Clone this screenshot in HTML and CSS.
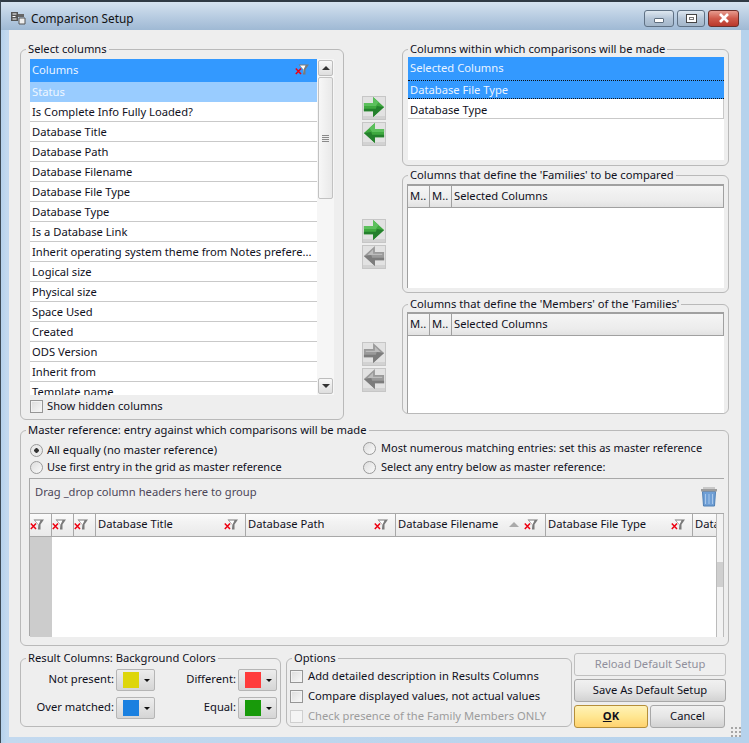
FILE: index.html
```html
<!DOCTYPE html>
<html lang="en">
<head>
<meta charset="utf-8">
<title>Comparison Setup</title>
<link rel="stylesheet" href="styles.css">
</head>
<body>
<svg class="defs" width="0" height="0" aria-hidden="true">
  <defs>
    <symbol id="filter" viewBox="0 0 14 11">
      <path d="M3.500 .5h10.500L10.500 5.500V10.500H8V5.500z" fill="#7a7a7a"/>
      <path d="M5 1.500h5.500L8.600 5.500V9.500L8.200 5.200z" fill="#fff"/>
      <path d="M.8 4.500l5.200 5.500M6 4.500L.8 10" stroke="#ee0010" stroke-width="1.500"/>
    </symbol>
    <symbol id="arrow-right" viewBox="0 0 24 24">
      <path d="M1 7.500h10V1l12 11-12 11v-6.500H1z" fill="#3fa93f"/>
      <path d="M1 7.500h10V1l6 5.500-3 4.500H1z" fill="#5cc05c"/>
      <path d="M1 14h13l1-3 8 1-12 11v-6.500H1z" fill="#24802c"/>
    </symbol>
    <symbol id="arrow-left" viewBox="0 0 24 24">
      <path d="M23 7.500H13V1L1 12l12 11v-6.500h10z" fill="#3fa93f"/>
      <path d="M23 7.500H13V1L7 6.500l3 4.500h13z" fill="#5cc05c"/>
      <path d="M23 14H10l-1-3-8 1 12 11v-6.500h10z" fill="#24802c"/>
    </symbol>
    <symbol id="arrow-right-off" viewBox="0 0 24 24">
      <path d="M1 7.500h10V1l12 11-12 11v-6.500H1z" fill="#9a9a9a"/>
      <path d="M3 9.500h10V5l6 6H3z" fill="#bcbcbc"/>
      <path d="M1 14h13l1-3 8 1-12 11v-6.500H1z" fill="#7c7c7c"/>
    </symbol>
    <symbol id="arrow-left-off" viewBox="0 0 24 24">
      <path d="M23 7.500H13V1L1 12l12 11v-6.500h10z" fill="#9a9a9a"/>
      <path d="M21 9.500H11V5l-6 6h16z" fill="#bcbcbc"/>
      <path d="M23 14H10l-1-3-8 1 12 11v-6.500h10z" fill="#7c7c7c"/>
    </symbol>
  </defs>
</svg>
<div class="frame">
  <header class="titlebar">
    <svg class="app-icon" width="16" height="14" viewBox="0 0 16 14"><path d="M1 1h7v9H1z" fill="#555"/><path d="M2.500 3h4M2.500 5.500h3M2.500 8h4" stroke="#fff"/><path d="M8 3h6v3H8z" fill="#666"/><path d="M9 7h6v6H9z" fill="#eee" stroke="#555"/></svg>
    <span class="title">Comparison Setup</span>
    <div class="winbtns">
      <div class="winbtn"><span class="glyph-min"></span></div>
      <div class="winbtn narrow"><span class="glyph-max"></span></div>
      <div class="winbtn close"><svg width="12" height="10" viewBox="0 0 12 10"><path d="M2 1l8 8M10 1L2 9" stroke="#fff" stroke-width="2.600"/></svg></div>
    </div>
  </header>
  <main class="client">
    <div class="top">
      <fieldset class="group select-group">
        <legend>Select columns</legend>
        <div class="list-wrap">
          <div class="list">
            <div class="list-head"><span>Columns</span><svg class="filter" width="14" height="11"><use href="#filter"/></svg></div>
            <div class="row status">Status</div>
            <div class="row">Is Complete Info Fully Loaded?</div>
            <div class="row">Database Title</div>
            <div class="row">Database Path</div>
            <div class="row">Database Filename</div>
            <div class="row">Database File Type</div>
            <div class="row">Database Type</div>
            <div class="row">Is a Database Link</div>
            <div class="row">Inherit operating system theme from Notes prefere...</div>
            <div class="row">Logical size</div>
            <div class="row">Physical size</div>
            <div class="row">Space Used</div>
            <div class="row">Created</div>
            <div class="row">ODS Version</div>
            <div class="row">Inherit from</div>
            <div class="row">Template name</div>
          </div>
          <div class="vscroll">
            <div class="sbtn"><span class="tri-up"></span></div>
            <div class="thumb"><span class="grip"></span></div>
            <div class="track"></div>
            <div class="sbtn"><span class="tri-down"></span></div>
          </div>
        </div>
        <label class="check show-hidden"><span class="box"></span>Show hidden columns</label>
      </fieldset>

      <div class="mid">
        <div class="arrows a1">
          <div class="arrow-btn"><svg width="22" height="22"><use href="#arrow-right"/></svg></div>
          <div class="arrow-btn"><svg width="22" height="22"><use href="#arrow-left"/></svg></div>
        </div>
        <div class="arrows a2">
          <div class="arrow-btn"><svg width="22" height="22"><use href="#arrow-right"/></svg></div>
          <div class="arrow-btn"><svg width="22" height="22"><use href="#arrow-left-off"/></svg></div>
        </div>
        <div class="arrows a3">
          <div class="arrow-btn"><svg width="22" height="22"><use href="#arrow-right-off"/></svg></div>
          <div class="arrow-btn"><svg width="22" height="22"><use href="#arrow-left-off"/></svg></div>
        </div>
      </div>

      <div class="right">
        <fieldset class="group g-within">
          <legend>Columns within which comparisons will be made</legend>
          <div class="sel-list">
            <div class="sel-head">Selected Columns</div>
            <div class="sel-row active">Database File Type</div>
            <div class="sel-row">Database Type</div>
          </div>
        </fieldset>
        <fieldset class="group g-fam">
          <legend>Columns that define the 'Families' to be compared</legend>
          <div class="mini-grid">
            <div class="mini-head"><span class="mh m">M..</span><span class="mh m">M..</span><span class="mh">Selected Columns</span></div>
          </div>
        </fieldset>
        <fieldset class="group g-mem">
          <legend>Columns that define the 'Members' of the 'Families'</legend>
          <div class="mini-grid">
            <div class="mini-head"><span class="mh m">M..</span><span class="mh m">M..</span><span class="mh">Selected Columns</span></div>
          </div>
        </fieldset>
      </div>
    </div>

    <fieldset class="group master">
      <legend>Master reference: entry against which comparisons will be made</legend>
      <div class="radios">
        <div class="radio-col left">
          <label class="radio"><span class="dot on"></span>All equally (no master reference)</label>
          <label class="radio tight"><span class="dot"></span>Use first entry in the grid as master reference</label>
        </div>
        <div class="radio-col rightc">
          <label class="radio"><span class="dot"></span>Most numerous matching entries: set this as master reference</label>
          <label class="radio"><span class="dot"></span>Select any entry below as master reference:</label>
        </div>
      </div>
      <div class="grid">
        <div class="group-band">
          <span class="hint">Drag _drop column headers here to group</span>
          <svg class="trash" width="18" height="21" viewBox="0 0 18 21">
            <path d="M2.500 5.500h13l-1 14.500h-11z" fill="#6f9fd6" stroke="#4f7fb3"/>
            <path d="M5.500 8v10M9 8v10M12.500 8v10" stroke="#a9c8ea"/>
            <path d="M1 3h16v2.500H1z" fill="#9c9c9c"/>
            <path d="M3 1h12v2H3z" fill="#c8c8c8"/>
          </svg>
        </div>
        <div class="head">
          <div class="hc ic"><svg width="14" height="11"><use href="#filter"/></svg></div>
          <div class="hc ic"><svg width="14" height="11"><use href="#filter"/></svg></div>
          <div class="hc ic"><svg width="14" height="11"><use href="#filter"/></svg></div>
          <div class="hc wide"><span>Database Title</span><svg width="14" height="11"><use href="#filter"/></svg></div>
          <div class="hc wide"><span>Database Path</span><svg width="14" height="11"><use href="#filter"/></svg></div>
          <div class="hc wide"><span>Database Filename</span><i class="sort"></i><svg width="14" height="11"><use href="#filter"/></svg></div>
          <div class="hc wider"><span>Database File Type</span><svg width="14" height="11"><use href="#filter"/></svg></div>
          <div class="hc last"><span>Data</span></div>
        </div>
        <div class="body">
          <div class="gutter"></div>
          <div class="cells"></div>
        </div>
        <div class="vbar"><span class="vbar-thumb"></span></div>
      </div>
    </fieldset>

    <div class="bottom">
      <fieldset class="group result">
        <legend>Result Columns: Background Colors</legend>
        <div class="colors">
          <span class="clabel">Not present:</span>
          <div class="cbtn"><i class="swatch yellow"></i><i class="caret"></i></div>
          <span class="clabel">Different:</span>
          <div class="cbtn"><i class="swatch red"></i><i class="caret"></i></div>
          <span class="clabel">Over matched:</span>
          <div class="cbtn"><i class="swatch blue"></i><i class="caret"></i></div>
          <span class="clabel">Equal:</span>
          <div class="cbtn"><i class="swatch green"></i><i class="caret"></i></div>
        </div>
      </fieldset>
      <fieldset class="group options">
        <legend>Options</legend>
        <label class="check"><span class="box"></span>Add detailed description in Results Columns</label>
        <label class="check"><span class="box"></span>Compare displayed values, not actual values</label>
        <label class="check off"><span class="box"></span>Check presence of the Family Members ONLY</label>
      </fieldset>
      <div class="actions">
        <button class="btn disabled" type="button">Reload Default Setup</button>
        <button class="btn" type="button">Save As Default Setup</button>
        <div class="ok-row">
          <button class="btn ok" type="button"><u>O</u>K</button>
          <button class="btn cancel" type="button">Cancel</button>
        </div>
      </div>
    </div>
    <div class="resize-grip"></div>
  </main>
</div>
</body>
</html>
```
FILE: styles.css
```css
* { box-sizing: border-box; }
html, body { margin: 0; padding: 0; height: 100%; overflow: hidden; background: #b9d3ec; }
body {
  font-family: "Noto Sans", "Open Sans", sans-serif;
  font-size: 11.2px;
  line-height: 14px;
  color: #10101c;
}
.defs { position: absolute; }

.frame {
  width: 749px;
  height: 743px;
  display: flex;
  flex-direction: column;
  padding: 0 8px 6px;
  border-top: 2px solid #2f3a44;
  border-left: 1px solid #3d4a55;
  background: linear-gradient(90deg, #b6d2ec 0, #c3d9ef 6px, #b6d2ec 100%);
}
.titlebar {
  height: 28px;
  flex: none;
  margin: 0 -8px;
  padding: 4px 9px 0 9px;
  display: flex;
  align-items: center;
  background: linear-gradient(180deg, #d5e2ef 0, #b9cde2 50%, #9fb9d4 100%);
}
.app-icon { margin-right: 5px; }
.title { flex: 1; font-size: 11.8px; color: #111; }
.winbtns { display: flex; gap: 3px; margin-right: 1px; }
.winbtn {
  width: 30px;
  height: 17px;
  border: 1px solid #5f7184;
  border-radius: 3px;
  display: flex;
  align-items: center;
  justify-content: center;
  background: linear-gradient(180deg, #dde7f0 0, #b5c6d8 50%, #a3b6c9 100%);
}
.winbtn.narrow { width: 28px; }
.winbtn.close {
  width: 31px;
  border-color: #6b2f2a;
  background: linear-gradient(180deg, #e79c8f 0, #cf5a4b 50%, #b9382c 100%);
}
.glyph-min { width: 10px; height: 5px; margin-top: 5px; background: #fff; border: 1px solid #5f6f80; border-radius: 1px; }
.glyph-max { width: 11px; height: 9px; background: #fff; border: 1px solid #444; box-shadow: inset 0 0 0 2px #fff, inset 0 0 0 3px #777; }

.client {
  flex: 1;
  min-height: 0;
  display: flex;
  flex-direction: column;
  padding: 12px 12px 0 11px;
  background: #eeeeee;
  position: relative;
}

.group {
  margin: 0;
  min-width: 0;
  border: 1px solid #b9b9b9;
  border-radius: 6px;
  background: transparent;
}
.group legend {
  padding: 0 2px;
  line-height: 14px;
  white-space: nowrap;
}
.select-group legend { margin-left: -4px; }
.g-within legend { margin-left: 0; }
.g-fam legend, .g-mem legend { margin-left: 1px; }
.master legend { margin-left: -3px; }
.result legend { margin-left: 5px; }
.options legend { margin-left: 2px; }

.top { display: flex; height: 378px; }
.select-group { width: 324px; height: 378px; padding: 3px 9px 0; }
.list-wrap { display: flex; height: 336px; background: #f6f6f6; }
.list { width: 287px; overflow: hidden; background: #fff; }
.list-head {
  height: 23px;
  padding: 0 8px 2px 2px;
  display: flex;
  align-items: center;
  justify-content: space-between;
  background: #3399ff;
  color: #eaf4ff;
}
.row {
  height: 20px;
  line-height: 19px;
  padding-left: 2px;
  border-bottom: 1px solid #c9c9c9;
  white-space: nowrap;
}
.row.status { background: #99ccff; color: #eef7ff; border-bottom: 0; }

.vscroll { width: 17px; padding: 1px 1px; display: flex; flex-direction: column; background: #f6f6f6; }
.sbtn {
  height: 16px;
  flex: none;
  border: 1px solid #bdbdbd;
  border-radius: 2px;
  background: linear-gradient(180deg, #f8f8f8, #dedede);
  display: flex;
  align-items: center;
  justify-content: center;
}
.tri-up { border: 4px solid transparent; border-top: 0; border-bottom: 4px solid #333; }
.tri-down { border: 4px solid transparent; border-bottom: 0; border-top: 4px solid #333; }
.thumb {
  height: 122px;
  flex: none;
  margin-top: 1px;
  border: 1px solid #c2c2c2;
  border-radius: 2px;
  background: linear-gradient(90deg, #f7f7f7, #e9e9e9);
  display: flex;
  align-items: center;
  justify-content: center;
}
.grip { width: 7px; height: 7px; background: repeating-linear-gradient(180deg, #8a8a8a 0 1px, #eee 1px 2px); }
.track { flex: 1; }

.check { display: flex; align-items: center; white-space: nowrap; }
.box {
  width: 13px;
  height: 13px;
  flex: none;
  margin-right: 5px;
  border: 1px solid #969696;
  background: linear-gradient(135deg, #dcdcdc, #f8f8f8);
  box-shadow: inset 0 0 0 1px #f2f2f2;
}
.check.off { color: #9c9c9c; }
.check.off .box { border-color: #cfcfcf; background: #f4f4f4; box-shadow: none; }
.show-hidden { height: 14px; margin-top: 4px; }
.show-hidden .box { margin-right: 4px; }

.mid { width: 58px; flex: none; display: flex; flex-direction: column; padding: 54px 0 0 18px; }
.arrows { display: flex; flex-direction: column; gap: 2px; }
.a2 { margin-top: 73px; }
.a3 { margin-top: 73px; }
.arrow-btn {
  width: 24px;
  height: 24px;
  display: flex;
  align-items: center;
  justify-content: center;
  padding-bottom: 2px;
  background: linear-gradient(180deg, #e2e2e2 0, #e2e2e2 85%, #d2d2d2 85%);
  border: 1px solid #c6c6c6;
}

.right { width: 327px; flex: none; display: flex; flex-direction: column; }
.g-within { height: 124px; padding: 1px 5px 0; }
.g-fam { height: 125px; margin-top: 2px; padding: 2px 4px 0; }
.g-mem { height: 117px; margin-top: 4px; padding: 1px 4px 0; }
.sel-list { height: 103px; width: 316px; background: #fff; }
.sel-head { height: 23px; line-height: 22px; padding-left: 2px; background: #3399ff; color: #eaf4ff; }
.sel-row { height: 20px; line-height: 21px; padding-left: 2px; border-bottom: 1px solid #c9c9c9; border-right: 1px solid #c9c9c9; }
.sel-row.active {
  height: 19px;
  line-height: 17px;
  background: #3399ff;
  color: #eaf4ff;
  border: 0;
  border-top: 1px dotted #111;
  border-bottom: 1px dotted #111;
}
.mini-grid { height: 104px; width: 317px; background: #fff; border-left: 1px solid #a0a0a0; border-top: 2px solid #a0a0a0; }
.g-mem .mini-grid { height: 101px; }
.mini-head {
  height: 22px;
  display: flex;
  align-items: center;
  background: linear-gradient(180deg, #f5f5f5 0, #ececec 70%, #e2e2e2 100%);
  border-bottom: 1px solid #a0a0a0;
  border-right: 1px solid #a0a0a0;
}
.mh { height: 100%; line-height: 20px; padding-left: 2px; }
.mh.m { width: 22px; border-right: 1px solid #a0a0a0; overflow: hidden; }

.master { height: 223px; margin-top: 3px; padding: 0 4px 0 8px; }
.radios { display: flex; height: 41px; }
.radio-col { display: flex; flex-direction: column; }
.radio-col.left { width: 333px; padding-top: 6px; gap: 3px; }
.radio-col.rightc { padding-top: 4px; gap: 5px; }
.radio { display: flex; align-items: center; height: 14px; white-space: nowrap; }
.radio.tight { font-size: 11px; }
.rightc .radio { font-size: 11px; }
.dot {
  width: 13px;
  height: 13px;
  flex: none;
  margin: 0 4px 0 1px;
  border: 1px solid #9a9a9a;
  border-radius: 50%;
  background: linear-gradient(135deg, #dddddd, #fafafa);
}
.rightc .dot { margin-right: 5px; }
.dot.on { background: radial-gradient(circle, #333 0 2px, #eaeaea 2.500px); }

.grid { width: 695px; height: 158px; display: grid; grid-template-columns: 1fr 8px; grid-template-rows: 35px 23px 100px; border-top: 1px solid #a8a8a8; border-left: 1px solid #a8a8a8; }
.group-band { grid-column: 1 / 3; display: flex; align-items: center; justify-content: space-between; padding: 0 6px 8px 5px; background: #eeeeee; border-bottom: 1px solid #a8a8a8; }
.hint { color: #4c4658; }
.trash { margin-top: 9px; }
.head {
  display: flex;
  overflow: hidden;
  background: linear-gradient(180deg, #fbfbfb 0, #f3f3f3 35%, #e9e9e9 100%);
  border-bottom: 1px solid #a8a8a8;
}
.hc {
  height: 100%;
  display: flex;
  align-items: center;
  flex: none;
  border-right: 1px solid #a8a8a8;
  padding: 0 7px 2px 2px;
  white-space: nowrap;
}
.hc span { flex: 1; }
.hc.ic { width: 22px; padding: 0 0 1px; }
.hc.wide { width: 150px; }
.hc.wider { width: 147px; }
.hc.last { flex: 1; border-right: 0; overflow: hidden; }
.sort { width: 0; height: 0; margin-right: 5px; border: 5px solid transparent; border-top: 0; border-bottom: 5px solid #aaaaaa; }
.body { display: flex; background: #fff; }
.gutter { width: 22px; background: #cccccc; }
.cells { flex: 1; }
.vbar { grid-column: 2; grid-row: 2 / 4; display: flex; justify-content: center; background: #f2f2f2; border-right: 1px solid #bbb; border-left: 1px solid #bbb; }
.vbar-thumb { width: 6px; height: 25px; margin-top: 48px; background: #cfcfcf; }

.bottom { display: flex; margin-top: 5px; }
.result { width: 261px; height: 76px; padding: 4px 0 0 0; }
.colors { display: grid; grid-template-columns: 93px 39px 79px 39px; column-gap: 2px; row-gap: 6px; align-items: center; }
.clabel { text-align: right; white-space: nowrap; padding-bottom: 2px; }
.cbtn {
  height: 22px;
  display: flex;
  align-items: center;
  justify-content: space-between;
  padding: 0 4px 0 6px;
  border: 1px solid #b5b5b5;
  border-radius: 2px;
  background: linear-gradient(180deg, #ededed, #d5d5d5);
}
.swatch { width: 16px; height: 16px; }
.yellow { background: #ded60a; }
.red { background: #ff3b3b; }
.blue { background: #1a80e0; }
.green { background: #189a0a; }
.caret { border: 3px solid transparent; border-bottom: 0; border-top: 3px solid #111; }

.options { width: 286px; height: 76px; margin-left: 5px; padding: 4px 0 0 3px; }
.options .check { height: 14px; margin-bottom: 6px; }
.actions { width: 152px; margin-left: 2px; padding-top: 2px; display: flex; flex-direction: column; gap: 3px; }
.btn {
  height: 23px;
  flex: none;
  padding: 0 0 2px;
  font: inherit;
  color: #10101c;
  border: 1px solid #a8a8a8;
  border-radius: 3px;
  background: linear-gradient(180deg, #f1f1f1 0, #e6e6e6 50%, #d2d2d2 100%);
}
.btn.disabled { color: #8f8f9c; background: #efefef; border-color: #c0c0c0; }
.ok-row { display: flex; gap: 2px; }
.btn.ok {
  width: 74px;
  font-weight: 700;
  border-color: #b58f3a;
  background: linear-gradient(180deg, #fff2b8 0, #ffe792 50%, #ffd26f 100%);
}
.btn.cancel { width: 75px; }
.resize-grip {
  position: absolute;
  right: 0;
  bottom: 0;
  width: 11px;
  height: 11px;
  background-image: radial-gradient(circle, #a6a6a6 1px, transparent 1.200px);
  background-size: 4px 4px;
}
```
